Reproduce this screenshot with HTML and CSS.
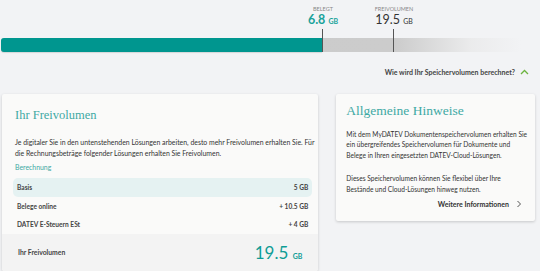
FILE: index.html
```html
<!DOCTYPE html>
<html lang="de">
<head>
<meta charset="utf-8">
<link rel="stylesheet" href="styles.css">
</head>
<body>
<div class="page">
  <section class="usage">
    <div class="labels">
      <div class="label used" style="left:322px"><span class="cap">BELEGT</span><span class="val">6.8 <small>GB</small></span></div>
      <div class="label free" style="left:393px"><span class="cap">FREIVOLUMEN</span><span class="val">19.5 <small>GB</small></span></div>
    </div>
    <div class="bar">
      <div class="fill" style="width:321px"></div>
      <div class="mark" style="left:321px"></div>
      <div class="mark" style="left:392px"></div>
    </div>
    <div class="how">Wie wird Ihr Speichervolumen berechnet? <svg class="chev" width="9" height="6" viewBox="0 0 9 6"><path d="M1 5 L4.5 1.5 L8 5" fill="none" stroke="#6cb33f" stroke-width="1.3"/></svg></div>
  </section>
  <section class="cards">
    <div class="card left">
      <div class="card-body">
        <h2>Ihr Freivolumen</h2>
        <p>Je digitaler Sie in den untenstehenden Lösungen arbeiten, desto mehr Freivolumen erhalten Sie. Für die Rechnungsbeträge folgender Lösungen erhalten Sie Freivolumen.</p>
        <div class="calc">Berechnung</div>
        <div class="row hl"><span>Basis</span><span>5 GB</span></div>
        <div class="row"><span>Belege online</span><span>+ 10.5 GB</span></div>
        <div class="row"><span>DATEV E-Steuern ESt</span><span>+ 4 GB</span></div>
      </div>
      <div class="total"><span>Ihr Freivolumen</span><span class="big">19.5 <small>GB</small></span></div>
    </div>
    <div class="card right">
      <h2>Allgemeine Hinweise</h2>
      <p>Mit dem MyDATEV Dokumentenspeichervolumen erhalten Sie ein übergreifendes Speichervolumen für Dokumente und Belege in Ihren eingesetzten DATEV-Cloud-Lösungen.</p>
      <p>Dieses Speichervolumen können Sie flexibel über Ihre Bestände und Cloud-Lösungen hinweg nutzen.</p>
      <div class="more">Weitere Informationen <svg width="6" height="8" viewBox="0 0 6 8"><path d="M1.5 1 L4.5 4 L1.5 7" fill="none" stroke="#555" stroke-width="1"/></svg></div>
    </div>
  </section>
</div>
</body>
</html>
```
FILE: styles.css
```css
* { box-sizing: border-box; }
html, body { margin: 0; padding: 0; }
body {
  background: #f2f3f5;
  font-family: Lato, "Noto Sans", sans-serif;
  color: #333;
  width: 540px;
  height: 271px;
  overflow: hidden;
}
.page { padding: 0 0 0 1px; }
.usage { position: relative; }
.labels { position: relative; height: 38px; }
.label {
  position: absolute;
  top: 6px;
  transform: translateX(-50%);
  display: flex;
  flex-direction: column;
  align-items: center;
  white-space: nowrap;
}
.cap { font-size: 5.5px; color: #888; line-height: 6px; }
.val { font-size: 12.5px; line-height: 13px; font-weight: 700; margin-top: 1px; }
.val small { font-size: 7px; font-weight: 700; }
.used .val { color: #19a29a; }
.free .val { color: #333; font-weight: 400; }
.free .val small { font-weight: 400; }
.bar {
  position: relative;
  height: 14px;
  border-radius: 3px 0 0 3px;
  background: linear-gradient(to right, #cbcbcb 0, #cccccc 395px, rgba(230,230,230,0.6) 470px, rgba(242,243,245,0) 520px);
}
.fill {
  height: 100%;
  background: #00968f;
  border-radius: 3px 0 0 3px;
  box-shadow: 0 1px 1px rgba(0,0,0,0.12);
}
.mark {
  position: absolute;
  top: -9px;
  bottom: 0;
  width: 1px;
  background: #555;
}
.how {
  display: flex;
  justify-content: flex-end;
  align-items: center;
  gap: 5px;
  font-size: 7px;
  font-weight: 700;
  color: #444;
  padding: 13px 11px 0 0;
  height: 27px;
}
.cards {
  display: flex;
  gap: 18px;
  padding: 15px 5px 0 1px;
  align-items: flex-start;
}
.card {
  background: #fafaf9;
  border-radius: 2px;
  box-shadow: 0 1px 3px rgba(0,0,0,0.18);
}
.card.left { width: 317px; }
.card.right { width: 199px; padding: 8px 7px 13px 10px; }
.card-body { padding: 11px 8px 0 13px; }
h2 {
  font-family: "Liberation Serif", "DejaVu Serif", serif;
  font-weight: normal;
  color: #3ea9a4;
  margin: 0;
}
.left h2 { font-size: 12.5px; line-height: 20px; margin-bottom: 12px; }
.right h2 { font-size: 13.5px; line-height: 18px; margin-bottom: 9px; }
p {
  font-size: 6.9px;
  line-height: 10.5px;
  color: #333;
  margin: 0;
}
.left p { margin-right: -10px; }
.right p { font-size: 6.6px; line-height: 10.4px; margin-bottom: 13px; }
.right p + p { margin-bottom: 6px; }
.calc { font-size: 6.9px; color: #3ea9a4; margin: 5px 0 7px; }
.row {
  display: flex;
  justify-content: space-between;
  font-size: 6.6px;
  font-weight: 700;
  color: #444;
  height: 18.5px;
  align-items: center;
  padding: 0 4px;
  margin: 0 -2px;
}
.row.hl { background: #e5f2f2; border-radius: 5px; }
.total {
  background: #f3f3f3;
  display: flex;
  justify-content: space-between;
  align-items: center;
  height: 37px;
  padding: 0 16px 0 16px;
  font-size: 6.8px;
  font-weight: 700;
  color: #444;
  border-radius: 0 0 2px 2px;
}
.big { font-size: 17px; color: #0f9c95; font-weight: 400; }
.big small { font-size: 7px; font-weight: 700; }
.more {
  display: flex;
  justify-content: flex-end;
  align-items: center;
  gap: 7px;
  font-size: 7px;
  font-weight: 700;
  color: #333;
  padding-right: 6px;
}
```
